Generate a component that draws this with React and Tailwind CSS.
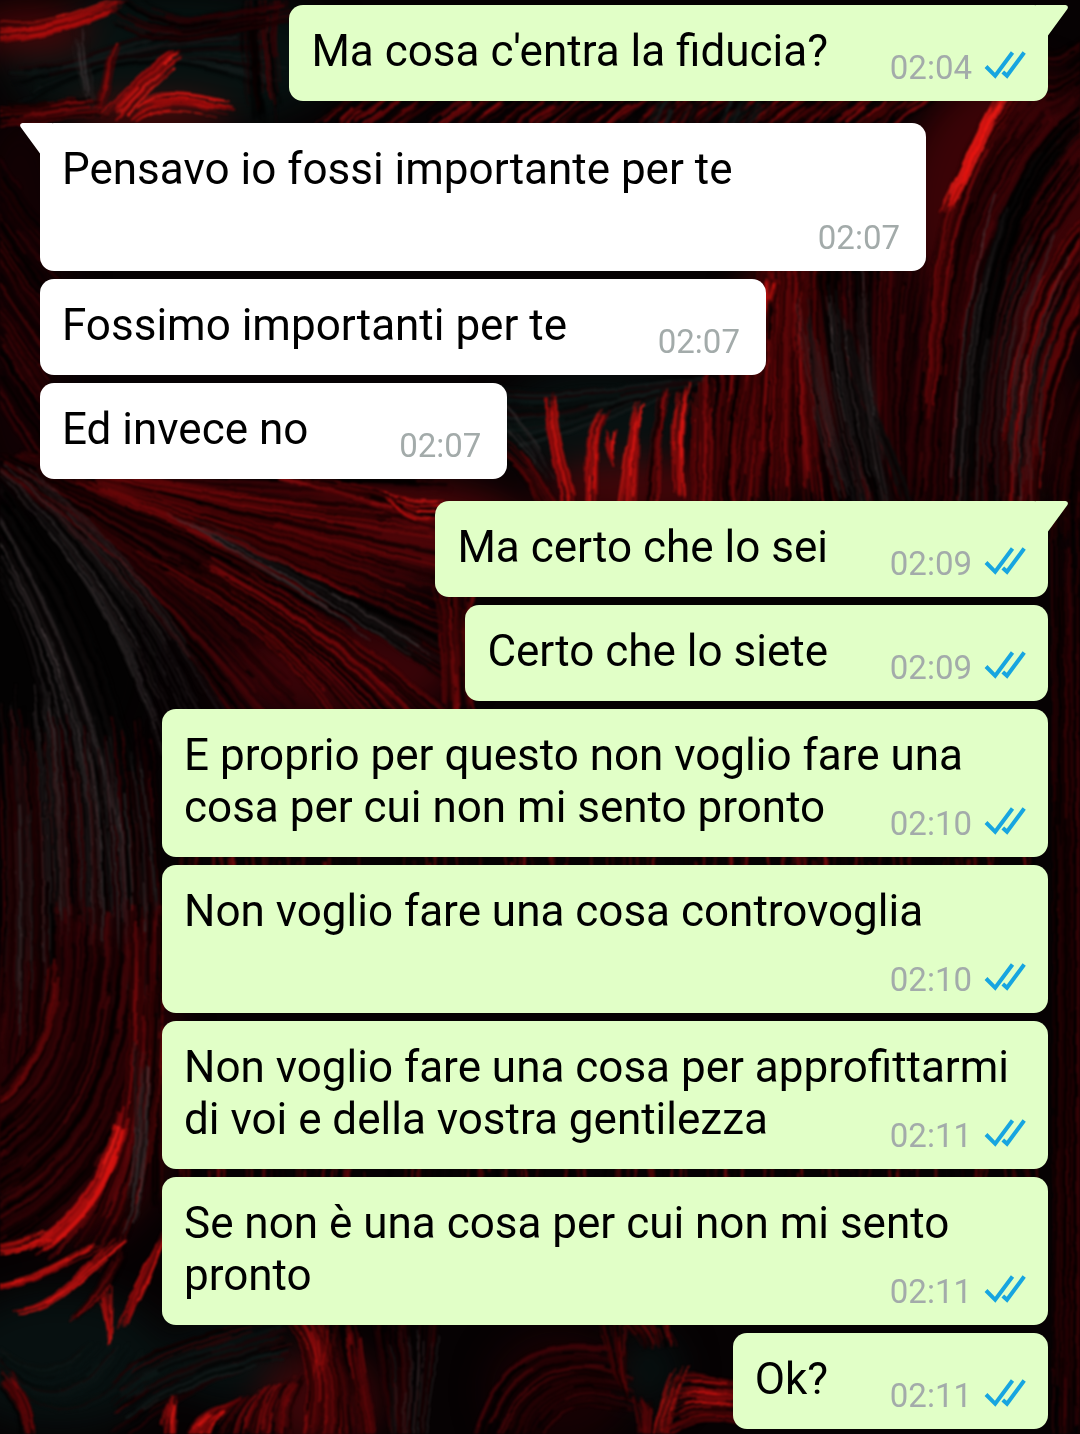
import React from 'react';

const messages = [
  { id: 1, out: true, first: true, text: "Ma cosa c'entra la fiducia?", time: '02:04' },
  { id: 2, out: false, first: true, text: 'Pensavo io fossi importante per te', time: '02:07' },
  { id: 3, out: false, text: 'Fossimo importanti per te', time: '02:07' },
  { id: 4, out: false, text: 'Ed invece no', time: '02:07' },
  { id: 5, out: true, first: true, text: 'Ma certo che lo sei', time: '02:09' },
  { id: 6, out: true, text: 'Certo che lo siete', time: '02:09' },
  { id: 7, out: true, text: 'E proprio per questo non voglio fare una cosa per cui non mi sento pronto', time: '02:10' },
  { id: 8, out: true, text: 'Non voglio fare una cosa controvoglia', time: '02:10' },
  { id: 9, out: true, text: 'Non voglio fare una cosa per approfittarmi di voi e della vostra gentilezza', time: '02:11' },
  { id: 10, out: true, text: 'Se non è una cosa per cui non mi sento pronto', time: '02:11' },
  { id: 11, out: true, text: 'Ok?', time: '02:11' },
];

const DARK = ['#2a0205', '#360407', '#180103', '#000000', '#000000', '#450508'];
const RED = ['#560507', '#6e080a', '#3a0406', '#120102', '#000000', '#860b0d'];
const BRIGHT = ['#d3120f', '#a80e0e', '#7c090b', '#ec1c16', '#4c0507'];
const FLAME = ['#e3140f', '#c01010', '#f0201a'];
const GREY = ['#3a3435', '#54484a', '#2a2425', '#150d0e'];
const TEAL = ['#08100f', '#0c1716', '#141c1c', '#030505', '#1a0406'];
const BLACK = ['#000000', '#060404', '#0f0c0c'];

// Soft patches of colour under the strands: cx, cy, rx, ry, fill
const patches = [
  [170, 60, 170, 70, '#061110'],
  [30, 30, 60, 22, '#4a0507'],
  [150, 116, 80, 12, '#6c0909'],
  [20, 300, 50, 190, '#120103'],
  [1010, 210, 110, 140, '#3a0306'],
  [980, 420, 100, 90, '#200204'],
  [785, 370, 50, 120, '#4a0406'],
  [600, 420, 100, 50, '#071010'],
  [650, 490, 110, 30, '#420508'],
  [380, 530, 150, 50, '#4a0508'],
  [340, 670, 120, 50, '#380307'],
  [60, 640, 90, 140, '#030202'],
  [80, 1080, 100, 160, '#2c0205'],
  [60, 1360, 110, 70, '#071010'],
  [230, 1360, 60, 40, '#061010'],
  [320, 1400, 60, 50, '#3a0508'],
  [560, 1390, 70, 60, '#160103'],
  [650, 1370, 30, 36, '#061010'],
];

// Each bundle fills the space between two cubic curves with n strands
const bundles = [
  // top left
  { a: [-20, 20, 40, 34, 70, 10, 130, -6], b: [-20, 46, 40, 40, 80, 30, 125, 6], n: 40, colors: BRIGHT, width: 2 },
  { a: [0, 60, 60, 90, 120, 20, 280, 0], b: [20, 110, 120, 40, 200, 60, 285, 100], n: 60, colors: TEAL, width: 3 },
  { a: [70, 30, 75, 60, 80, 80, 88, 110], b: [92, 26, 88, 60, 92, 80, 96, 110], n: 20, colors: GREY, width: 1 },
  { a: [92, 112, 104, 96, 102, 66, 116, 40], b: [98, 118, 112, 96, 112, 66, 122, 42], n: 12, colors: BRIGHT, width: 3 },
  { a: [98, 118, 125, 96, 150, 60, 182, 46], b: [118, 122, 140, 100, 160, 74, 188, 60], n: 30, colors: BRIGHT, width: 3 },
  { a: [130, 112, 150, 86, 180, 90, 232, 102], b: [130, 124, 160, 106, 190, 108, 236, 122], n: 30, colors: BRIGHT, width: 2 },
  { a: [-10, 104, 30, 112, 50, 98, 100, 94], b: [-10, 128, 40, 126, 60, 116, 110, 118], n: 34, colors: RED, width: 3 },
  { a: [244, -20, 236, 50, 250, 80, 248, 124], b: [285, -20, 268, 50, 284, 80, 288, 124], n: 34, colors: DARK, width: 3 },
  { a: [120, -20, 180, 40, 210, 10, 295, 0], b: [110, 20, 160, 60, 220, 30, 298, 22], n: 34, colors: DARK, width: 3 },
  // strip below the first message
  { a: [310, 130, 320, 116, 340, 106, 350, 96], b: [900, 130, 910, 116, 930, 106, 940, 96], n: 260, colors: RED, width: 3 },
  { a: [640, 128, 645, 115, 650, 108, 655, 96], b: [760, 128, 765, 115, 770, 108, 775, 96], n: 40, colors: TEAL, width: 4 },
  // left margin
  { a: [-20, 120, 0, 160, 20, 200, 60, 230], b: [-20, 380, 0, 400, 20, 440, 60, 500], n: 110, colors: DARK, width: 2 },
  // right side, sweeping down from the edge
  { a: [1010, 80, 930, 180, 925, 280, 900, 540], b: [1110, 160, 1000, 290, 985, 380, 1000, 540], n: 300, colors: DARK, width: 3 },
  { a: [1010, 80, 920, 200, 935, 280, 920, 430], b: [1060, 80, 960, 180, 955, 280, 945, 400], n: 60, colors: RED, width: 2 },
  { a: [1100, 90, 1010, 150, 970, 260, 950, 500], b: [1100, 120, 1010, 180, 990, 300, 970, 540], n: 60, colors: BLACK, width: 3 },
  { a: [1105, 190, 1030, 260, 1000, 360, 1000, 540], b: [1110, 280, 1070, 330, 1040, 420, 1040, 540], n: 120, colors: RED, width: 3 },
  { a: [1106, 330, 1060, 400, 1050, 450, 1050, 540], b: [1110, 400, 1084, 430, 1080, 470, 1080, 540], n: 60, colors: DARK, width: 2 },
  { a: [1002, 90, 975, 130, 962, 170, 938, 214], b: [1016, 90, 985, 130, 976, 170, 950, 216], n: 36, colors: FLAME, width: 2 },
  { a: [1000, 170, 970, 260, 955, 330, 945, 520], b: [1090, 260, 1050, 340, 1030, 400, 1050, 520], n: 50, colors: GREY, width: 1 },
  { a: [1040, 40, 1050, 60, 1070, 50, 1105, 10], b: [1040, 115, 1060, 120, 1070, 100, 1105, 80], n: 60, colors: DARK, width: 3 },
  // centre right, falling
  { a: [756, 240, 755, 350, 735, 430, 720, 530], b: [820, 240, 812, 350, 830, 430, 850, 530], n: 190, colors: RED, width: 2 },
  { a: [764, 275, 768, 310, 758, 350, 752, 470], b: [776, 272, 778, 310, 776, 350, 772, 440], n: 26, colors: RED, width: 2 },
  { a: [758, 280, 760, 290, 762, 300, 764, 316], b: [774, 276, 774, 290, 770, 300, 768, 316], n: 12, colors: FLAME, width: 2 },
  { a: [815, 240, 820, 350, 840, 430, 860, 530], b: [930, 240, 910, 350, 900, 430, 910, 530], n: 180, colors: DARK, width: 3 },
  { a: [825, 300, 822, 380, 860, 440, 880, 530], b: [846, 300, 850, 380, 900, 440, 920, 530], n: 50, colors: BLACK, width: 3 },
  { a: [790, 300, 806, 400, 820, 440, 850, 530], b: [870, 260, 870, 380, 880, 440, 900, 530], n: 50, colors: GREY, width: 1 },
  // tongues above the second reply
  { a: [496, 384, 550, 400, 600, 384, 720, 376], b: [496, 450, 560, 440, 600, 420, 680, 390], n: 60, colors: TEAL, width: 4 },
  { a: [546, 385, 540, 430, 556, 450, 562, 520], b: [556, 390, 550, 430, 566, 450, 578, 520], n: 22, colors: BRIGHT, width: 3 },
  { a: [604, 404, 580, 430, 590, 460, 582, 520], b: [612, 408, 592, 430, 600, 460, 594, 520], n: 26, colors: BRIGHT, width: 2 },
  { a: [602, 426, 606, 440, 604, 450, 612, 466], b: [618, 422, 616, 440, 612, 450, 616, 466], n: 12, colors: BRIGHT, width: 2 },
  { a: [638, 400, 624, 430, 626, 460, 616, 520], b: [648, 398, 634, 430, 640, 460, 634, 520], n: 34, colors: BRIGHT, width: 2 },
  { a: [660, 388, 655, 420, 650, 440, 644, 520], b: [672, 386, 664, 420, 660, 440, 660, 520], n: 26, colors: RED, width: 3 },
  { a: [678, 390, 670, 420, 672, 450, 674, 500], b: [694, 376, 682, 420, 684, 450, 686, 500], n: 30, colors: BRIGHT, width: 2 },
  { a: [692, 364, 690, 420, 694, 450, 690, 530], b: [750, 364, 745, 420, 730, 450, 740, 530], n: 110, colors: RED, width: 3 },
  { a: [496, 430, 520, 440, 530, 460, 570, 520], b: [496, 456, 520, 470, 526, 480, 546, 520], n: 28, colors: RED, width: 2 },
  { a: [500, 400, 520, 420, 540, 440, 556, 480], b: [500, 420, 515, 440, 530, 450, 550, 490], n: 16, colors: GREY, width: 1 },
  // left fan
  { a: [20, 450, 180, 490, 320, 470, 465, 480], b: [-20, 460, 120, 560, 180, 640, 260, 760], n: 280, colors: DARK, width: 3 },
  { a: [80, 466, 240, 500, 340, 506, 475, 510], b: [60, 480, 220, 550, 320, 600, 475, 700], n: 130, colors: RED, width: 2 },
  { a: [200, 530, 290, 570, 350, 600, 475, 650], b: [220, 540, 300, 580, 370, 630, 475, 700], n: 46, colors: BLACK, width: 3 },
  { a: [260, 476, 350, 496, 380, 516, 475, 540], b: [300, 476, 380, 490, 420, 500, 475, 520], n: 40, colors: RED, width: 3 },
  { a: [384, 490, 400, 496, 420, 500, 446, 498], b: [388, 498, 400, 516, 420, 530, 446, 516], n: 12, colors: FLAME, width: 2 },
  { a: [120, 550, 230, 600, 290, 660, 350, 750], b: [230, 560, 330, 620, 400, 660, 490, 750], n: 120, colors: RED, width: 2 },
  { a: [160, 510, 250, 560, 320, 600, 380, 650], b: [180, 510, 280, 560, 360, 600, 475, 680], n: 24, colors: GREY, width: 1 },
  { a: [-20, 460, 60, 540, 120, 620, 160, 760], b: [20, 460, 120, 540, 180, 620, 252, 750], n: 50, colors: GREY, width: 1 },
  { a: [-20, 540, 40, 640, 80, 720, 100, 900], b: [-20, 460, 80, 570, 120, 680, 170, 900], n: 110, colors: BLACK, width: 4 },
  { a: [-10, 570, 30, 640, 50, 700, 60, 880], b: [-10, 500, 60, 620, 100, 720, 140, 900], n: 44, colors: GREY, width: 1 },
  { a: [430, 580, 440, 630, 445, 660, 440, 725], b: [480, 580, 466, 630, 470, 660, 480, 725], n: 50, colors: RED, width: 3 },
  // left column
  { a: [-10, 700, 6, 860, 4, 940, -10, 1060], b: [150, 720, 164, 860, 166, 940, 164, 1220], n: 240, colors: DARK, width: 2 },
  { a: [-4, 660, 8, 820, 8, 900, 4, 1030], b: [140, 740, 160, 860, 164, 900, 160, 1100], n: 100, colors: GREY, width: 1 },
  { a: [50, 900, 60, 1030, 30, 1070, -30, 1110], b: [160, 900, 150, 1100, 110, 1200, -30, 1260], n: 230, colors: DARK, width: 4 },
  { a: [50, 960, 46, 1040, 30, 1070, -20, 1114], b: [64, 960, 58, 1040, 40, 1070, -20, 1126], n: 30, colors: RED, width: 3 },
  { a: [130, 900, 134, 1080, 130, 1180, 40, 1260], b: [165, 900, 164, 1080, 160, 1180, 110, 1280], n: 100, colors: RED, width: 2 },
  { a: [134, 1040, 134, 1100, 140, 1180, 120, 1230], b: [150, 1040, 150, 1100, 150, 1180, 130, 1240], n: 24, colors: GREY, width: 1 },
  { a: [118, 1112, 108, 1150, 90, 1216, 20, 1250], b: [128, 1112, 122, 1170, 90, 1220, 40, 1256], n: 44, colors: BRIGHT, width: 3 },
  { a: [-20, 1246, 10, 1244, 30, 1236, 46, 1228], b: [-20, 1260, 20, 1252, 36, 1250, 60, 1240], n: 26, colors: BRIGHT, width: 2 },
  { a: [-20, 1286, 30, 1282, 60, 1260, 96, 1240], b: [-20, 1292, 36, 1286, 70, 1264, 104, 1246], n: 24, colors: BRIGHT, width: 2 },
  { a: [10, 1310, 50, 1312, 70, 1276, 116, 1236], b: [14, 1314, 56, 1312, 76, 1284, 130, 1240], n: 24, colors: BRIGHT, width: 2 },
  { a: [60, 1326, 84, 1308, 94, 1296, 120, 1240], b: [70, 1322, 90, 1310, 110, 1300, 130, 1246], n: 20, colors: RED, width: 2 },
  { a: [94, 1290, 106, 1306, 106, 1330, 108, 1346], b: [112, 1286, 112, 1306, 112, 1330, 110, 1346], n: 20, colors: BRIGHT, width: 2 },
  { a: [114, 1332, 126, 1304, 136, 1290, 160, 1240], b: [130, 1328, 134, 1304, 148, 1290, 170, 1220], n: 40, colors: BRIGHT, width: 2 },
  // bottom
  { a: [-10, 1340, 30, 1380, 60, 1370, 90, 1340], b: [-10, 1350, 30, 1440, 110, 1430, 150, 1340], n: 50, colors: TEAL, width: 2 },
  { a: [-10, 1380, 10, 1400, 20, 1410, 24, 1450], b: [10, 1370, 30, 1400, 36, 1410, 34, 1450], n: 40, colors: RED, width: 3 },
  { a: [110, 1380, 140, 1350, 170, 1340, 260, 1316], b: [110, 1450, 170, 1400, 230, 1370, 300, 1350], n: 50, colors: DARK, width: 2 },
  { a: [120, 1380, 150, 1360, 190, 1350, 290, 1320], b: [120, 1430, 170, 1390, 230, 1370, 290, 1360], n: 40, colors: TEAL, width: 4 },
  { a: [162, 1450, 160, 1420, 165, 1405, 172, 1392], b: [176, 1450, 176, 1420, 178, 1405, 178, 1392], n: 22, colors: BRIGHT, width: 2 },
  { a: [180, 1450, 190, 1420, 200, 1412, 224, 1406], b: [290, 1450, 290, 1410, 294, 1390, 310, 1370], n: 120, colors: RED, width: 2 },
  { a: [180, 1450, 190, 1424, 200, 1418, 218, 1412], b: [206, 1450, 212, 1424, 220, 1418, 230, 1408], n: 24, colors: BRIGHT, width: 2 },
  { a: [280, 1316, 310, 1350, 316, 1380, 296, 1460], b: [360, 1310, 356, 1350, 372, 1400, 380, 1460], n: 130, colors: RED, width: 2 },
  { a: [284, 1318, 300, 1336, 310, 1350, 314, 1370], b: [340, 1316, 336, 1340, 330, 1360, 320, 1380], n: 22, colors: BRIGHT, width: 1 },
  { a: [370, 1300, 376, 1350, 390, 1400, 390, 1460], b: [440, 1300, 436, 1350, 430, 1400, 420, 1460], n: 60, colors: DARK, width: 2 },
  { a: [384, 1330, 392, 1380, 394, 1400, 388, 1460], b: [440, 1330, 436, 1380, 430, 1400, 424, 1460], n: 24, colors: GREY, width: 1 },
  { a: [470, 1450, 490, 1360, 540, 1330, 620, 1350], b: [540, 1450, 560, 1400, 590, 1396, 650, 1420], n: 90, colors: DARK, width: 3 },
  { a: [596, 1316, 606, 1350, 612, 1380, 630, 1404], b: [632, 1316, 628, 1340, 624, 1370, 626, 1404], n: 34, colors: RED, width: 2 },
  { a: [616, 1316, 630, 1332, 640, 1334, 640, 1350], b: [670, 1316, 670, 1332, 674, 1334, 676, 1346], n: 40, colors: RED, width: 2 },
  { a: [630, 1396, 636, 1408, 640, 1420, 640, 1450], b: [650, 1396, 652, 1408, 654, 1420, 650, 1450], n: 26, colors: RED, width: 3 },
  { a: [650, 1450, 654, 1410, 664, 1390, 676, 1366], b: [668, 1450, 670, 1410, 680, 1390, 690, 1366], n: 34, colors: BRIGHT, width: 1 },
  { a: [670, 1376, 690, 1370, 710, 1376, 750, 1384], b: [660, 1444, 690, 1420, 710, 1418, 750, 1428], n: 80, colors: RED, width: 2 },
  { a: [690, 1380, 700, 1374, 720, 1380, 750, 1386], b: [680, 1410, 700, 1398, 720, 1404, 750, 1410], n: 18, colors: BRIGHT, width: 2 },
  // right edge and the gaps between replies
  { a: [1050, 500, 1052, 800, 1056, 1200, 1050, 1464], b: [1082, 500, 1080, 800, 1084, 1200, 1082, 1464], n: 130, colors: DARK, width: 2 },
  { a: [180, 850, 180, 860, 180, 870, 180, 880], b: [1040, 850, 1040, 860, 1040, 870, 1040, 880], n: 160, colors: RED, width: 3 },
  { a: [180, 1160, 180, 1170, 180, 1176, 180, 1186], b: [1040, 1160, 1040, 1170, 1040, 1176, 1040, 1186], n: 160, colors: RED, width: 3 },
];

// Small seeded generator so the wallpaper is the same on every render
function createRandom(seed) {
  let s = seed;
  return () => {
    s = (s * 16807) % 2147483647;
    return s / 2147483647;
  };
}

function buildStrands() {
  const random = createRandom(4711);
  const strands = [];
  bundles.forEach(({ a, b, n, colors, width }) => {
    for (let i = 0; i < n; i++) {
      const t = random();
      const p = a.map((v, k) => (v + (b[k] - v) * t + (random() - 0.5) * 4).toFixed(1));
      // Every strand shows only one stretch of its curve, so bundles fade out at the ends
      const length = 30 + random() * 60;
      const start = random() * (100 - length);
      strands.push({
        d: `M${p[0]} ${p[1]}C${p[2]} ${p[3]} ${p[4]} ${p[5]} ${p[6]} ${p[7]}`,
        stroke: colors[Math.floor(random() * colors.length)],
        strokeWidth: (width * (0.4 + random() * 0.8)).toFixed(1),
        pathLength: 100,
        strokeDasharray: `${length.toFixed(0)} 200`,
        strokeDashoffset: (-start).toFixed(0),
        opacity: (0.35 + random() * 0.5).toFixed(2),
      });
    }
  });
  return strands;
}

const strands = buildStrands();

const Wallpaper = () => (
  <svg
    className="absolute inset-0 h-full w-full"
    viewBox="0 0 1080 1434"
    preserveAspectRatio="xMidYMid slice"
    aria-hidden="true"
  >
    <defs>
      <filter id="patch-blur" x="-50%" y="-50%" width="200%" height="200%" colorInterpolationFilters="sRGB">
        <feGaussianBlur stdDeviation="18" />
      </filter>
      <filter id="strand-rough" filterUnits="userSpaceOnUse" x="0" y="0" width="1080" height="1434" colorInterpolationFilters="sRGB">
        <feTurbulence type="fractalNoise" baseFrequency="0.04" numOctaves="2" seed="8" result="noise" />
        <feDisplacementMap in="SourceGraphic" in2="noise" scale="5" xChannelSelector="R" yChannelSelector="G" />
        <feGaussianBlur stdDeviation="0.9" />
      </filter>
    </defs>
    <rect width="1080" height="1434" fill="#060203" />
    <g filter="url(#patch-blur)">
      {patches.map(([cx, cy, rx, ry, fill], i) => (
        <ellipse key={i} cx={cx} cy={cy} rx={rx} ry={ry} fill={fill} />
      ))}
    </g>
    <g fill="none" filter="url(#strand-rough)">
      {strands.map((strand, i) => (
        <path key={i} {...strand} />
      ))}
    </g>
  </svg>
);

const Tail = ({ out }) => (
  <svg
    className={out ? 'absolute top-0 -right-5 h-8 w-8 text-[#e1ffc7]' : 'absolute top-0 -left-5 h-8 w-8 -scale-x-100 text-white'}
    viewBox="0 0 32 32"
    fill="currentColor"
    aria-hidden="true"
  >
    <path d="M0 0H29.5Q33 0.5 31.4 4L12 30.5V32H0Z" />
  </svg>
);

const ReadTicks = () => (
  <svg className="mb-1.5 h-7 w-[42px]" viewBox="0 0 42 28" fill="none" stroke="#17a5e0" strokeWidth="4" role="img" aria-label="Letto">
    <path d="M2 15.5L11.2 24.8L28.5 1.5" />
    <path d="M18.8 21L23 24.8L40.2 1.5" />
  </svg>
);

const Message = ({ message }) => {
  const { out, first, text, time } = message;

  return (
    <li className={`${out ? 'self-end bg-[#e1ffc7]' : 'self-start bg-white'} ${first ? 'mt-[22px]' : 'mt-2'} relative grid max-w-[886px] rounded-[14px]`}>
      {first && <Tail out={out} />}
      {/* The empty inline block keeps room for the time on the last line */}
      <p className="relative col-start-1 row-start-1 px-[22px] pt-5 pb-6 text-[44px] leading-[52px] text-black">
        {text}
        <span className={out ? 'inline-block h-px w-[198px]' : 'inline-block h-px w-[177px]'} />
      </p>
      <div className={`${out ? 'pr-[22px]' : 'pr-[26px]'} relative col-start-1 row-start-1 flex items-center gap-3 self-end justify-self-end pb-[13px]`}>
        <time className="text-[33px] leading-10 text-[#a3abaa]">{time}</time>
        {out && <ReadTicks />}
      </div>
    </li>
  );
};

const App = () => {
  return (
    <main className="relative min-h-screen overflow-hidden bg-black font-[Roboto,sans-serif]">
      <Wallpaper />
      <ul className="relative -mt-[17px] flex flex-col pr-8 pb-1 pl-10">
        {messages.map((message) => (
          <Message key={message.id} message={message} />
        ))}
      </ul>
    </main>
  );
};

export default App;
